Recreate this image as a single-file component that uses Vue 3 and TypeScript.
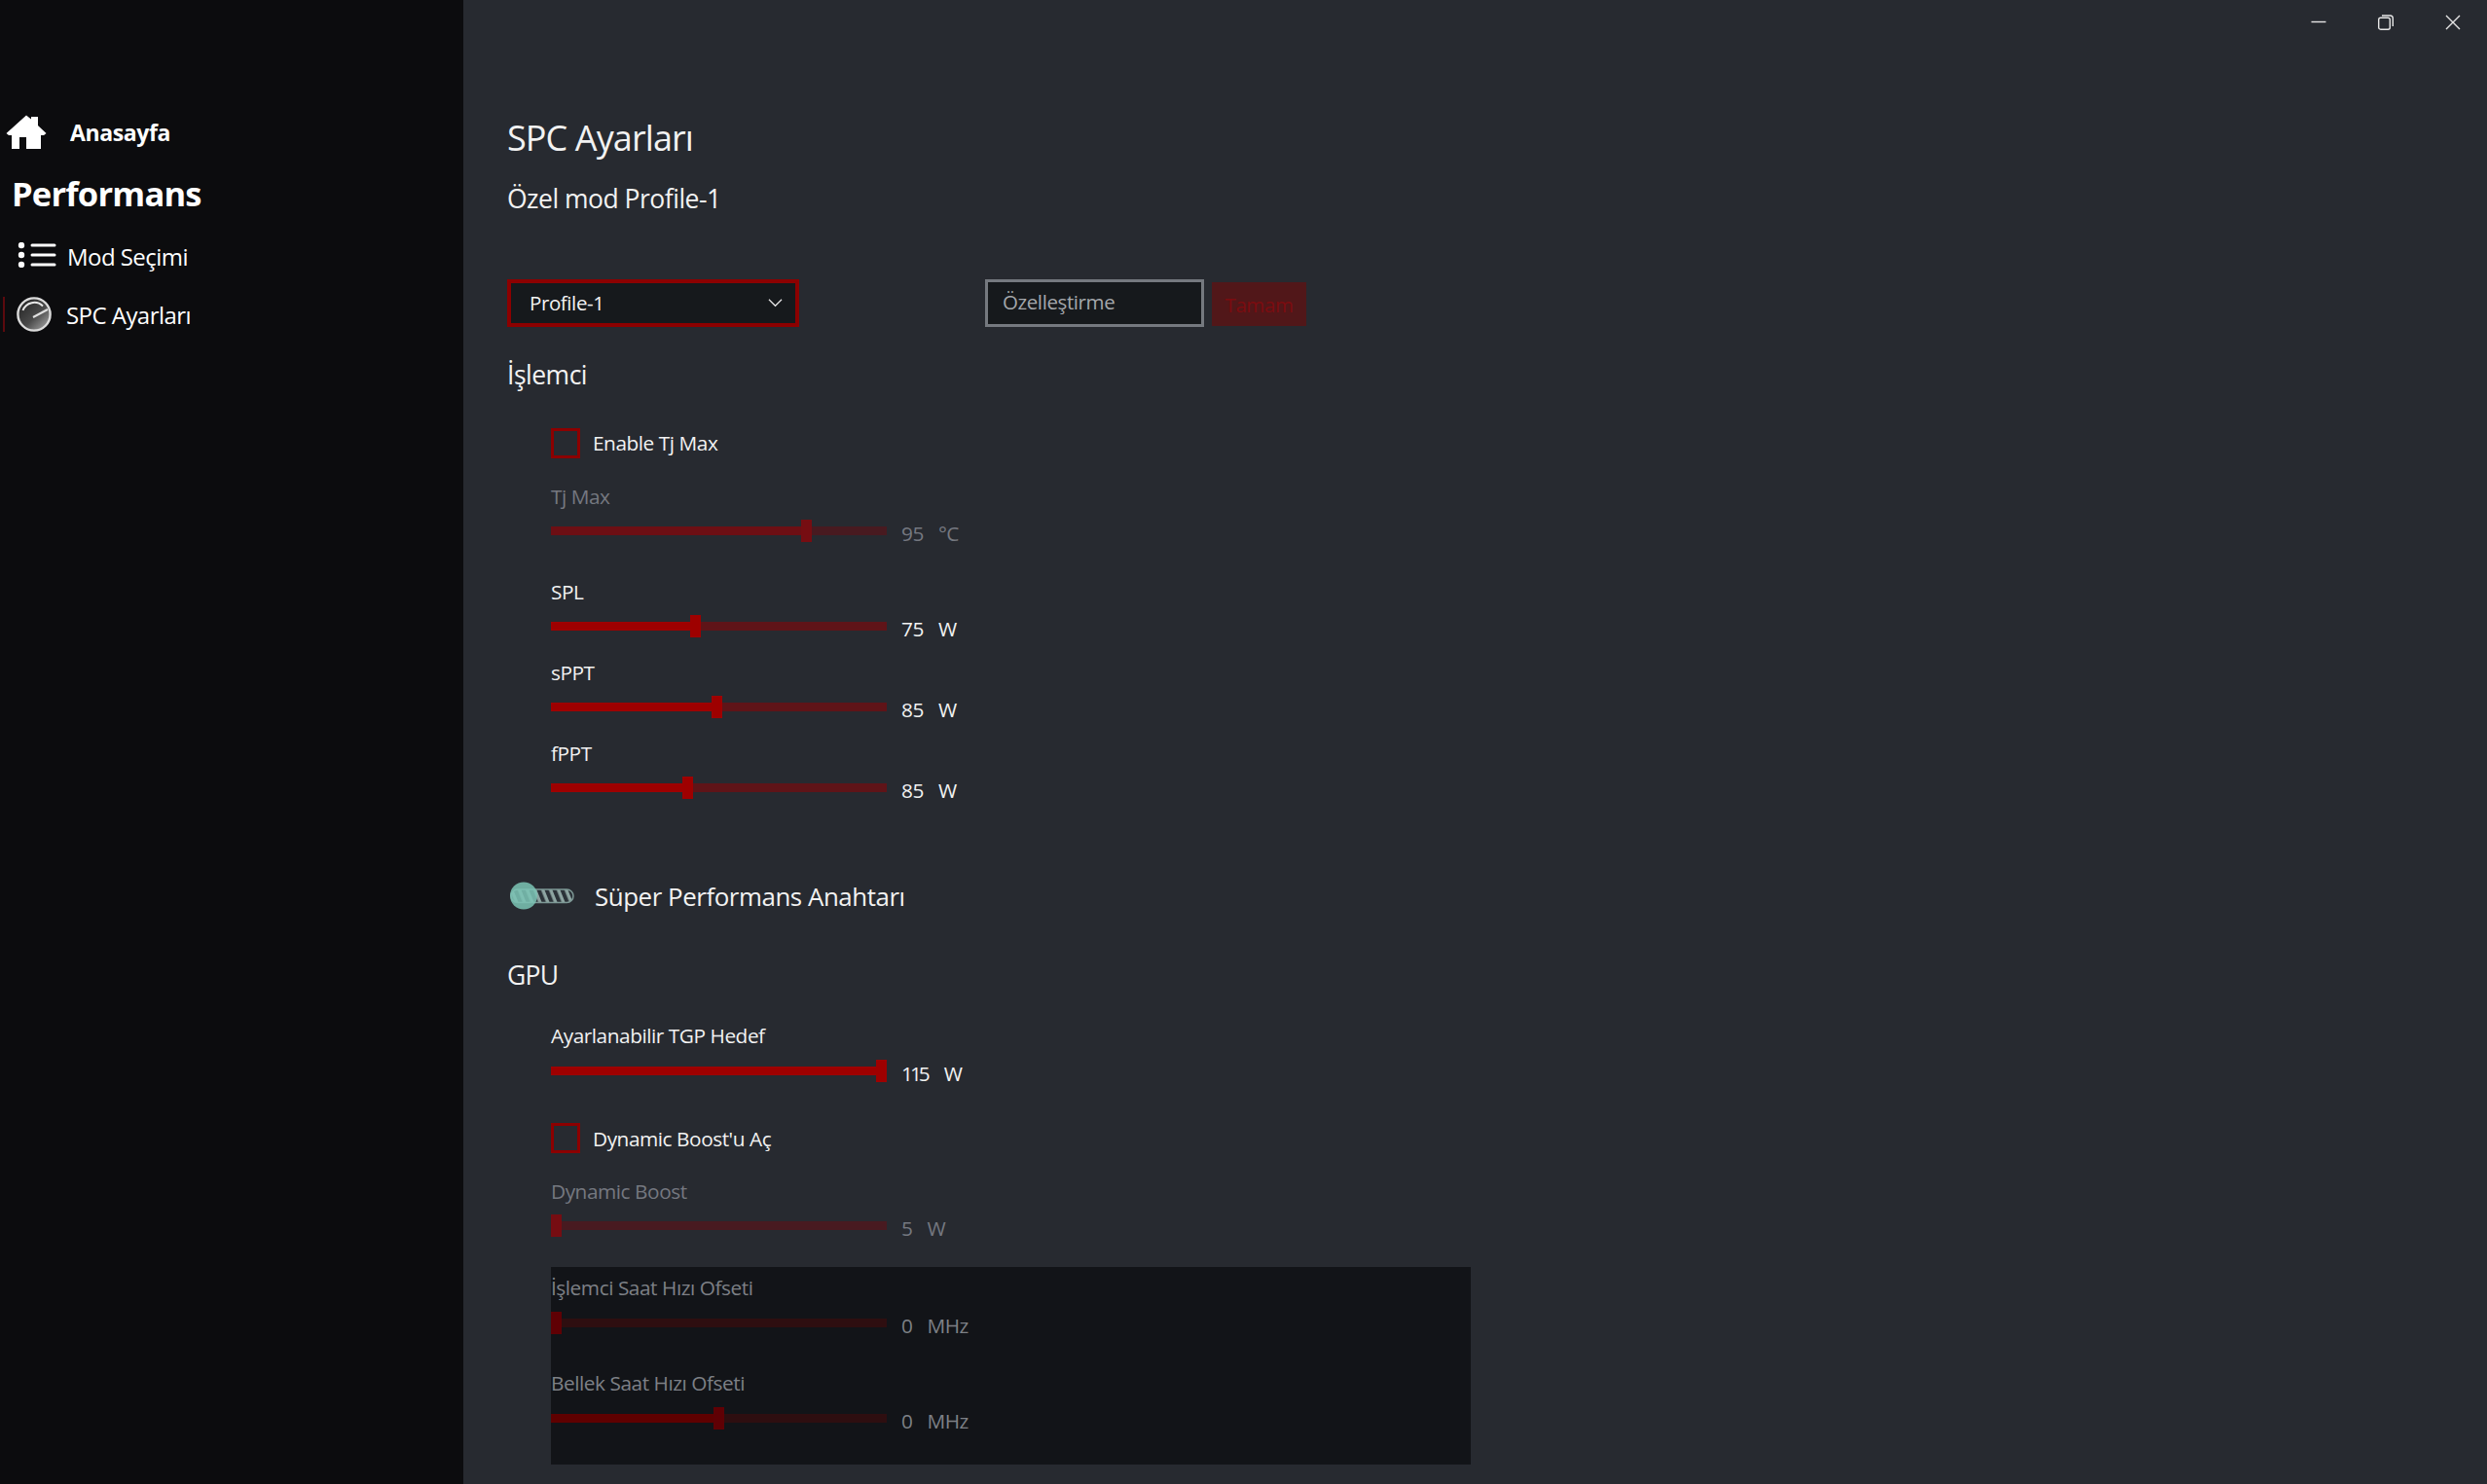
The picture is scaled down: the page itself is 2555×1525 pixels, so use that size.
<script setup lang="ts">
interface Slider {
  label: string
  thumb: number
  value: string
  unit: string
  disabled?: boolean
}

const cpuSliders: Slider[] = [
  { label: 'Tj Max', thumb: 258, value: '95', unit: '°C', disabled: true },
  { label: 'SPL', thumb: 144, value: '75', unit: 'W' },
  { label: 'sPPT', thumb: 166, value: '85', unit: 'W' },
  { label: 'fPPT', thumb: 136, value: '85', unit: 'W' }
]
const offsetSliders: Slider[] = [
  { label: 'İşlemci Saat Hızı Ofseti', thumb: 1, value: '0', unit: 'MHz', disabled: true },
  { label: 'Bellek Saat Hızı Ofseti', thumb: 168, value: '0', unit: 'MHz', disabled: true }
]
const tgp: Slider = { label: 'Ayarlanabilir TGP Hedef', thumb: 335, value: '115', unit: 'W' }
const boost: Slider = { label: 'Dynamic Boost', thumb: 1, value: '5', unit: 'W', disabled: true }
</script>

<template>
  <div class="app">
    <aside class="side">
      <div class="home">
        <svg class="home-ic" viewBox="0 0 42 36" width="42" height="36">
          <path fill="#fff" d="M21 0.5 L26 4.5 V2 H33 V11 L41.5 19 L39 21 H36 V35 H21 V23 H14 V35 H6 V21 H3 L0.5 19 Z" />
        </svg>
        <span>Anasayfa</span>
      </div>
      <div class="perf">Performans</div>
      <div class="nav nav-mod">
        <svg class="list-ic" viewBox="0 0 40 26" width="40" height="26">
          <circle cx="4" cy="3" r="3.2" fill="#fff" />
          <circle cx="4" cy="13" r="3.2" fill="#fff" />
          <circle cx="4" cy="23" r="3.2" fill="#fff" />
          <path d="M15 3 H38 M15 13 H38 M15 23 H38" stroke="#fff" stroke-width="3" stroke-linecap="round" />
        </svg>
        <span>Mod Seçimi</span>
      </div>
      <div class="nav nav-spc">
        <i class="marker"></i>
        <svg class="gauge" viewBox="0 0 36 36" width="36" height="36">
          <defs>
            <linearGradient id="gaugeFill" x1="0" y1="0" x2="1" y2="1">
              <stop offset="0" stop-color="#1e1e1e" />
              <stop offset="0.55" stop-color="#4a4a4a" />
              <stop offset="1" stop-color="#b5b5b5" />
            </linearGradient>
          </defs>
          <circle cx="18" cy="18" r="16.6" fill="url(#gaugeFill)" stroke="#dcdcdc" stroke-width="2.4" />
          <path d="M6.5 14 A12.5 12.5 0 0 1 27 9.5" fill="none" stroke="#e8e8e8" stroke-width="2" />
          <path d="M17 21 L32 13" stroke="#e0e0e0" stroke-width="2" />
        </svg>
        <span>SPC Ayarları</span>
      </div>
    </aside>

    <main class="main">
      <div class="win">
        <svg viewBox="0 0 16 16" width="16" height="16"><path d="M0.5 7.5 H15.5" stroke="#e6e6e6" stroke-width="1.4" /></svg>
        <svg viewBox="0 0 16 16" width="16" height="16" fill="none" stroke="#e6e6e6" stroke-width="1.4">
          <rect x="0.7" y="3.2" width="11.6" height="12" rx="2" />
          <path d="M4 1 H12.5 Q15.3 1 15.3 3.8 V12" />
        </svg>
        <svg viewBox="0 0 16 16" width="16" height="16"><path d="M1 1 L15 15 M15 1 L1 15" stroke="#e6e6e6" stroke-width="1.4" /></svg>
      </div>

      <h1 class="title">SPC Ayarları</h1>
      <h2 class="sub">Özel mod Profile-1</h2>

      <div class="profile-row">
        <div class="select">
          <span>Profile-1</span>
          <svg viewBox="0 0 16 10" width="15" height="10" fill="none"><path d="M1 1.5 L8 8.5 L15 1.5" stroke="#e6e6e6" stroke-width="1.3" /></svg>
        </div>
        <div class="input">Özelleştirme</div>
        <div class="ok">Tamam</div>
      </div>

      <h3 class="sect sect-cpu">İşlemci</h3>

      <div class="indent">
        <label class="check check-tj"><i class="box"></i><span>Enable Tj Max</span></label>
        <div class="group-cpu">
          <div v-for="s in cpuSliders" :key="s.label" class="slider" :class="{ off: s.disabled }">
            <div class="s-label">{{ s.label }}</div>
            <div class="s-row">
              <div class="track">
                <div class="fill" :style="{ width: s.thumb + 'px' }"></div>
                <div class="thumb" :style="{ left: s.thumb + 'px' }"></div>
              </div>
              <span class="val">{{ s.value }}</span><span class="unit">{{ s.unit }}</span>
            </div>
          </div>
        </div>
      </div>

      <div class="super">
        <svg class="toggle" viewBox="0 0 66 29" width="66" height="29">
          <defs>
            <pattern id="hatch" width="8" height="14" patternUnits="userSpaceOnUse" patternTransform="skewX(22)">
              <rect width="8" height="14" fill="#8ea5a2" />
              <rect width="4.4" height="14" fill="#2b3238" />
            </pattern>
          </defs>
          <rect x="1" y="8" width="64" height="13.5" rx="6.7" fill="url(#hatch)" stroke="#7d9895" stroke-width="1.5" />
          <circle cx="14" cy="14.5" r="14" fill="#7cc4b4" fill-opacity="0.86" />
        </svg>
        <span>Süper Performans Anahtarı</span>
      </div>

      <h3 class="sect sect-gpu">GPU</h3>

      <div class="indent">
        <div class="slider tgp">
          <div class="s-label">{{ tgp.label }}</div>
          <div class="s-row">
            <div class="track">
              <div class="fill" :style="{ width: tgp.thumb + 'px' }"></div>
              <div class="thumb" :style="{ left: tgp.thumb + 'px' }"></div>
            </div>
            <span class="val narrow">{{ tgp.value }}</span><span class="unit">{{ tgp.unit }}</span>
          </div>
        </div>

        <label class="check check-db"><i class="box"></i><span>Dynamic Boost'u Aç</span></label>

        <div class="slider off boost">
          <div class="s-label">{{ boost.label }}</div>
          <div class="s-row">
            <div class="track">
              <div class="fill" :style="{ width: boost.thumb + 'px' }"></div>
              <div class="thumb" :style="{ left: boost.thumb + 'px' }"></div>
            </div>
            <span class="val">{{ boost.value }}</span><span class="unit">{{ boost.unit }}</span>
          </div>
        </div>

        <div class="panel">
          <div v-for="s in offsetSliders" :key="s.label" class="slider off dim">
            <div class="s-label">{{ s.label }}</div>
            <div class="s-row">
              <div class="track">
                <div class="fill" :style="{ width: s.thumb + 'px' }"></div>
                <div class="thumb" :style="{ left: s.thumb + 'px' }"></div>
              </div>
              <span class="val">{{ s.value }}</span><span class="unit">{{ s.unit }}</span>
            </div>
          </div>
        </div>
      </div>
    </main>
  </div>
</template>

<style>
html, body { margin: 0; background: #272a30; overflow: hidden; }
</style>

<style scoped>
.app {
  display: flex;
  width: 2555px;
  height: 1525px;
  overflow: hidden;
  font-family: "Open Sans", "Noto Sans", sans-serif;
  color: #f2f2f2;
  background: #272a30;
}
.side {
  flex: none;
  width: 476px;
  background: #0c0c0e;
  color: #fff;
  padding-top: 118px;
  box-sizing: border-box;
}
.home {
  display: flex;
  align-items: center;
  height: 36px;
  padding-left: 6px;
  font-weight: 700;
  font-size: 23px;
  letter-spacing: -0.4px;
}
.home-ic { margin-right: 24px; }
.perf {
  margin-top: 21px;
  padding-left: 12px;
  height: 48px;
  line-height: 48px;
  font-weight: 700;
  font-size: 34.5px;
  letter-spacing: -0.8px;
}
.nav {
  display: flex;
  align-items: center;
  font-size: 24px;
  letter-spacing: -0.55px;
  position: relative;
}
.nav-mod { margin-top: 27px; height: 26px; padding-left: 18px; }
.nav-mod span { margin-left: 11px; }
.list-ic { margin-bottom: 3px; }
.nav-spc { margin-top: 29px; height: 36px; padding-left: 17px; }
.nav-spc span { margin-left: 15px; }
.marker {
  position: absolute;
  left: 3px;
  top: 0;
  width: 2px;
  height: 36px;
  background: #5c0a0e;
}
.list-ic, .gauge, .home-ic { flex: none; }

.main {
  flex: 1;
  position: relative;
  padding-left: 45px;
  padding-right: 27px;
  box-sizing: border-box;
  min-width: 0;
}
.win {
  display: flex;
  justify-content: flex-end;
  align-items: flex-start;
  gap: 53px;
  height: 14px;
  padding-top: 15px;
}
.win svg { display: block; }
.title {
  margin: 91px 0 0;
  height: 44px;
  line-height: 44px;
  font-size: 36px;
  font-weight: 400;
  letter-spacing: -0.9px;
}
.sub {
  margin: 22px 0 0;
  height: 36px;
  line-height: 36px;
  font-size: 26.5px;
  font-weight: 400;
  letter-spacing: -0.5px;
}
.profile-row {
  display: flex;
  align-items: flex-start;
  margin-top: 65px;
  height: 49px;
}
.select {
  width: 300px;
  height: 49px;
  box-sizing: border-box;
  border: 4px solid #8c0000;
  background: #16191c;
  display: flex;
  align-items: center;
  justify-content: space-between;
  padding: 0 13px 2px 19px;
  font-size: 20.5px;
  letter-spacing: -0.4px;
}
.input {
  margin-left: 191px;
  width: 225px;
  height: 49px;
  box-sizing: border-box;
  border: 3px solid #75797f;
  background: #16191c;
  color: #a4a7ab;
  display: flex;
  align-items: center;
  padding: 0 0 4px 15px;
  font-size: 20.5px;
  letter-spacing: -0.4px;
}
.ok {
  margin: 3px 0 0 8px;
  width: 97px;
  height: 45px;
  background: #511719;
  color: #7c0c10;
  display: flex;
  align-items: center;
  justify-content: center;
  font-size: 20.5px;
  letter-spacing: -0.4px;
}
.sect {
  margin: 0;
  height: 36px;
  line-height: 36px;
  font-size: 26.5px;
  font-weight: 400;
  letter-spacing: -0.5px;
}
.sect-cpu { margin-top: 31px; }
.sect-gpu { margin-top: 49px; letter-spacing: -0.7px; }
.indent { padding-left: 45px; }
.check {
  display: flex;
  align-items: center;
  height: 31px;
  font-size: 20.8px;
  letter-spacing: -0.45px;
}
.check-tj { margin-top: 37px; }
.check-tj span { margin-bottom: 2px; }
.check-db { margin-top: 42px; }
.box {
  flex: none;
  width: 30px;
  height: 31px;
  box-sizing: border-box;
  border: 3.5px solid #8c0000;
  margin-right: 13px;
}
.group-cpu .slider:first-child { margin-top: 22px; margin-bottom: 15px; }
.slider { height: 83px; font-size: 20.8px; letter-spacing: -0.45px; }
.group-cpu .slider { height: 83px; }
.s-label { height: 40px; line-height: 34px; }
.tgp .s-label { height: 41px; }
.s-row {
  display: flex;
  align-items: center;
  height: 24px;
}
.track {
  position: relative;
  width: 345px;
  height: 9px;
  background: #5f1418;
  margin-right: 15px;
  flex: none;
}
.fill {
  position: absolute;
  left: 0;
  top: 0;
  bottom: 0;
  background: #9e0000;
}
.thumb {
  position: absolute;
  top: -7px;
  width: 11px;
  height: 23px;
  margin-left: -1px;
  background: #9e0000;
}
.val { position: relative; top: 3px; }
.narrow { letter-spacing: -3px; margin-right: 2px; }
.unit { position: relative; top: 3px; margin-left: 15px; }

.off { color: #757880; }
.off .track { background: #481a20; }
.off .fill { background: #6d0f14; }
.off .thumb { background: #760d12; }

.super {
  display: flex;
  align-items: center;
  margin-top: 66px;
  height: 29px;
  padding-left: 3px;
  font-size: 25.9px;
  letter-spacing: -0.45px;
}
.toggle { flex: none; margin-right: 21px; }

.tgp { margin-top: 27px; height: auto; }
.boost { margin-top: 22px; height: auto; }
.panel {
  margin-top: 31px;
  width: 945px;
  height: 203px;
  background: #121418;
  box-sizing: border-box;
  padding-top: 4px;
}
.dim { height: 98px; color: #7d8086; }
.dim .track { background: #2e0e10; }
.dim .fill { background: #5f0000; }
.dim .thumb { background: #5f0004; }
.dim .s-label { height: 41px; }
</style>
